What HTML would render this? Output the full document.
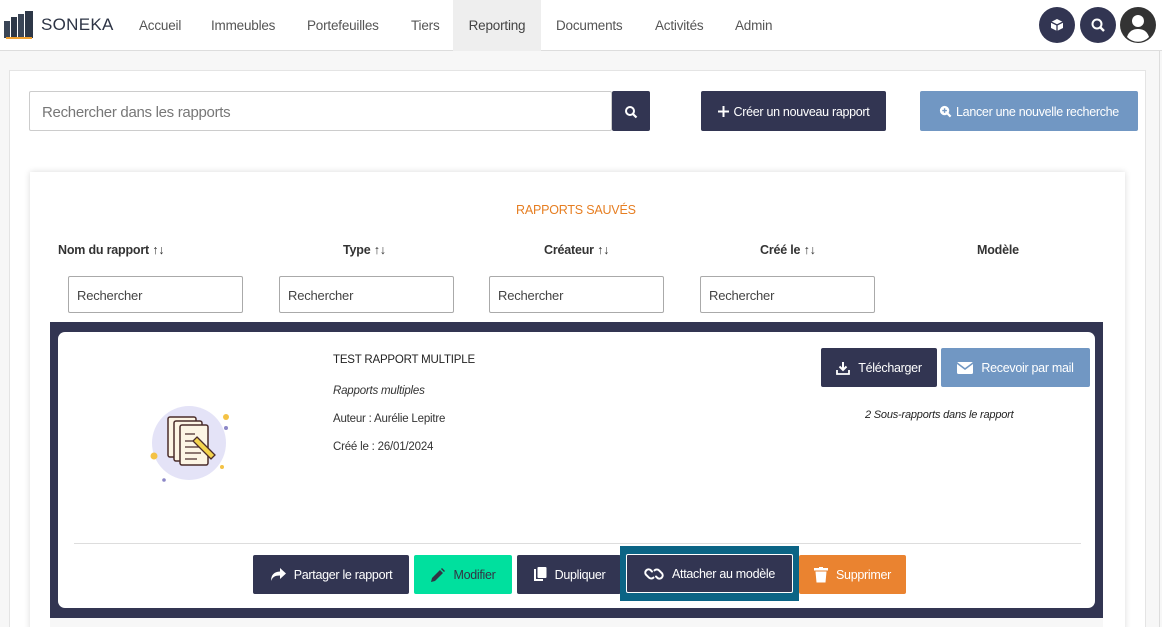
<!DOCTYPE html>
<html><head><meta charset="utf-8"><style>
*{box-sizing:border-box;margin:0;padding:0}
html,body{width:1162px;height:627px;overflow:hidden}
body{background:#f7f7f7;font-family:"Liberation Sans",sans-serif;position:relative;color:#333}
.nav{position:absolute;left:0;top:0;width:1162px;height:51px;background:#fff;border-bottom:1px solid #ddd}
.nav a{position:absolute;top:1px;height:50px;line-height:50px;font-size:13.5px;color:#555;letter-spacing:-.2px}
.abs{position:absolute}
.circ{position:absolute;top:7px;width:36px;height:36px;border-radius:50%;background:#323552}
.btn{position:absolute;color:#fff;font-size:12.5px;display:flex;align-items:center;justify-content:center;gap:8px;border-radius:2px;letter-spacing:-.3px;padding-top:1px}
.btn svg{flex:none}
.inp{position:absolute;height:37px;width:175px;border:1px solid #aaa;border-radius:2px;background:#fff;font-size:13px;color:#444;padding-left:8px;line-height:37px;letter-spacing:-.2px}
.th{position:absolute;top:243px;font-size:12.5px;font-weight:bold;color:#333;letter-spacing:-.2px}
</style></head><body>
<div class="nav">
 <svg class="abs" style="left:4px;top:11px" width="29" height="29" viewBox="0 0 29 29"><rect x="0" y="10" width="6" height="17" fill="#3a4556"/><rect x="7" y="6" width="6" height="21" fill="#2d3747"/><rect x="14" y="3" width="6" height="24" fill="#3a4556"/><rect x="21" y="0" width="8" height="27" fill="#2d3747"/><rect x="2" y="26" width="26" height="2" fill="#f0a030"/></svg>
 <div class="abs" style="left:41px;top:15px;font-size:17px;color:#2d3445;letter-spacing:.3px">SONEKA</div>
 <a style="left:139px">Accueil</a><a style="left:211px">Immeubles</a><a style="left:307px">Portefeuilles</a><a style="left:411px">Tiers</a>
 <a style="left:453px;width:88px;background:#eee;text-align:center;color:#444;top:0;height:51px;line-height:52px">Reporting</a>
 <a style="left:556px">Documents</a><a style="left:655px">Activités</a><a style="left:735px">Admin</a>
 <div class="circ" style="left:1039px"><svg width="36" height="36" viewBox="0 0 36 36"><path d="M18 12l6 3v6l-6 3-6-3v-6z" fill="#fff"/><path d="M12 15l6 3 6-3M18 18v6" stroke="#323552" stroke-width="1.3" fill="none"/></svg></div>
 <div class="circ" style="left:1080px"><svg width="36" height="36" viewBox="0 0 36 36"><circle cx="17" cy="17" r="4.5" stroke="#fff" stroke-width="2" fill="none"/><path d="M20 20l4 4" stroke="#fff" stroke-width="2.4"/></svg></div>
 <div class="circ" style="left:1120px;background:#333"><svg width="36" height="36" viewBox="0 0 36 36"><circle cx="18" cy="14" r="6" fill="#fff"/><path d="M7 30c2-6 6-8 11-8s9 2 11 8a15 15 0 0 1-22 0z" fill="#fff"/></svg></div>
</div>
<div class="abs" style="left:1159px;top:51px;width:1px;height:576px;background:#ddd"></div>
<div class="abs" style="left:9px;top:70px;width:1137px;height:570px;background:#fff;border:1px solid #e4e4e4"></div>
<div class="abs" style="left:29px;top:91px;width:583px;height:40px;border:1px solid #ccc;border-radius:2px;font-size:15px;color:#777;padding-left:12px;line-height:41px;letter-spacing:-.3px">Rechercher dans les rapports</div>
<div class="btn" style="left:612px;top:91px;width:38px;height:40px;background:#323552"><svg width="14" height="14" viewBox="0 0 14 14"><circle cx="6" cy="6" r="4" stroke="#fff" stroke-width="2" fill="none"/><path d="M9 9l3.5 3.5" stroke="#fff" stroke-width="2.2"/></svg></div>
<div class="btn" style="left:701px;top:91px;width:185px;height:40px;background:#323552;gap:5px"><svg width="11" height="11" viewBox="0 0 11 11"><path d="M5.5 0v11M0 5.5h11" stroke="#fff" stroke-width="2"/></svg>Créer un nouveau rapport</div>
<div class="btn" style="left:920px;top:91px;width:218px;height:40px;background:#7197c3;gap:4px"><svg width="13" height="13" viewBox="0 0 14 14"><circle cx="6" cy="6" r="5" fill="#fff"/><path d="M9 9l3.5 3.5" stroke="#fff" stroke-width="2.4"/><path d="M6 3.5v5M3.5 6h5" stroke="#7197c3" stroke-width="1.5"/></svg>Lancer une nouvelle recherche</div>
<div class="abs" style="left:30px;top:172px;width:1095px;height:460px;background:#fff;box-shadow:0 0 6px rgba(0,0,0,.15)"></div>
<div class="abs" style="left:516px;top:203px;font-size:12.5px;color:#e67e22;letter-spacing:-.2px">RAPPORTS SAUVÉS</div>
<div class="th" style="left:58px">Nom du rapport ↑↓</div><div class="th" style="left:343px">Type ↑↓</div><div class="th" style="left:544px">Créateur ↑↓</div><div class="th" style="left:760px">Créé le ↑↓</div><div class="th" style="left:977px">Modèle</div>
<div class="inp" style="left:68px;top:276px">Rechercher</div><div class="inp" style="left:279px;top:276px">Rechercher</div><div class="inp" style="left:489px;top:276px">Rechercher</div><div class="inp" style="left:700px;top:276px">Rechercher</div>
<div class="abs" style="left:50px;top:322px;width:1053px;height:296px;background:#323552"></div>
<div class="abs" style="left:50px;top:618px;width:1053px;height:20px;background:#f7f7f7"></div>
<div class="abs" style="left:58px;top:332px;width:1037px;height:276px;background:#fff;border-radius:7px"></div>
<svg class="abs" style="left:145px;top:400px" width="90" height="85" viewBox="0 0 90 85"><circle cx="44" cy="43" r="37" fill="#e4e3f7"/><circle cx="81" cy="17" r="3" fill="#f4c245"/><circle cx="9" cy="56" r="3.5" fill="#f4c245"/><circle cx="81" cy="28" r="2" fill="#8c87c7"/><circle cx="19" cy="80" r="1.8" fill="#8c87c7"/><circle cx="77" cy="67" r="2" fill="#f4c245"/><rect x="23" y="17" width="28" height="40" rx="2" fill="#fcf5e4" stroke="#4a2c2a" stroke-width="1.5"/><rect x="29" y="21" width="28" height="40" rx="2" fill="#fcf5e4" stroke="#4a2c2a" stroke-width="1.5"/><rect x="35" y="25" width="28" height="40" rx="2" fill="#fcf5e4" stroke="#4a2c2a" stroke-width="1.5"/><path d="M40 34h10M40 41h16M40 47h14M40 53h16M40 59h12" stroke="#4a2c2a" stroke-width="1.2"/><path d="M52 37l18 18-4 4-18-18z" fill="#f4d44d" stroke="#4a2c2a" stroke-width="1.3"/></svg>
<div class="abs" style="left:333px;top:354px;font-size:11.5px;color:#222;letter-spacing:-.2px">TEST RAPPORT MULTIPLE</div>
<div class="abs" style="left:333px;top:385px;font-size:11.5px;font-style:italic;color:#333;letter-spacing:-.2px">Rapports multiples</div>
<div class="abs" style="left:333px;top:413px;font-size:11.5px;color:#333;letter-spacing:-.2px">Auteur : Aurélie Lepitre</div>
<div class="abs" style="left:333px;top:441px;font-size:11.5px;color:#333;letter-spacing:-.2px">Créé le : 26/01/2024</div>
<div class="btn" style="left:821px;top:348px;width:116px;height:39px;background:#323552"><svg width="14" height="14" viewBox="0 0 14 14"><path d="M7 1v8M3.5 5.5L7 9l3.5-3.5" stroke="#fff" stroke-width="2" fill="none"/><path d="M1 9v4h12V9" stroke="#fff" stroke-width="1.8" fill="none"/></svg>Télécharger</div>
<div class="btn" style="left:941px;top:348px;width:149px;height:39px;background:#7197c3"><svg width="16" height="12" viewBox="0 0 16 12"><rect width="16" height="12" rx="1.5" fill="#fff"/><path d="M0 1l8 6 8-6" stroke="#7197c3" stroke-width="1.5" fill="none"/></svg>Recevoir par mail</div>
<div class="abs" style="left:865px;top:409px;font-size:11px;font-style:italic;color:#222;letter-spacing:-.2px">2 Sous-rapports dans le rapport</div>
<div class="abs" style="left:74px;top:543px;width:1007px;height:1px;background:#ddd"></div>
<div class="btn" style="left:253px;top:555px;width:156px;height:39px;background:#323552"><svg width="16" height="14" viewBox="0 0 16 14"><path d="M10 0l6 5.5-6 5.5V7.5C5 7.5 2.5 9 1 13 1 7 4 3.8 10 3.5z" fill="#fff"/></svg>Partager le rapport</div>
<div class="btn" style="left:414px;top:555px;width:98px;height:39px;background:#00e09e;color:#334"><svg width="15" height="15" viewBox="0 0 15 15"><path d="M1 14l1-4 8-8 3 3-8 8z M11 1l1-1 3 3-1 1z" fill="#334"/></svg>Modifier</div>
<div class="btn" style="left:517px;top:555px;width:104px;height:39px;background:#323552"><svg width="14" height="16" viewBox="0 0 14 16"><path d="M1 2h2v10h7v2H1z" fill="#fff"/><rect x="4.5" y="0" width="9" height="11" rx="1" fill="#fff"/></svg>Dupliquer</div>
<div class="abs" style="left:620px;top:546px;width:179px;height:55px;background:#0b6485"></div>
<div class="btn" style="left:626px;top:554px;width:167px;height:39px;background:#323552;border:1px solid #fff"><svg width="20" height="14" viewBox="0 0 20 14"><path d="M8 4.5l-1.5-1.5a3.3 3.3 0 0 0-4.6 4.6l3 3a3.3 3.3 0 0 0 4.6 0M12 9.5l1.5 1.5a3.3 3.3 0 0 0 4.6-4.6l-3-3a3.3 3.3 0 0 0-4.6 0" stroke="#fff" stroke-width="2" fill="none" stroke-linecap="round"/></svg>Attacher au modèle</div>
<div class="btn" style="left:799px;top:555px;width:107px;height:39px;background:#ea8330"><svg width="14" height="16" viewBox="0 0 14 16"><rect x="0" y="1" width="14" height="2.5" fill="#fff"/><rect x="5" y="0" width="4" height="2" fill="#fff"/><path d="M1.5 4.5h11l-1 11h-9z" fill="#fff"/></svg>Supprimer</div>
</body></html>
